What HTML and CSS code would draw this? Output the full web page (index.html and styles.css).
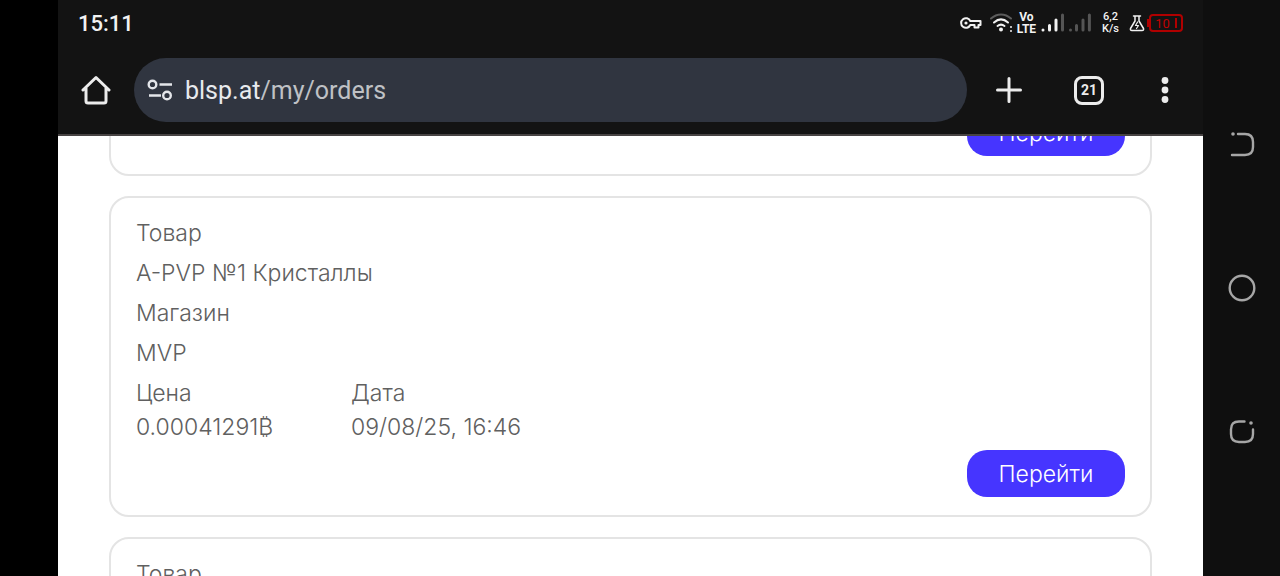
FILE: index.html
```html
<!DOCTYPE html>
<html lang="ru">
<head>
  <meta charset="UTF-8">
  <meta name="viewport" content="width=device-width, initial-scale=1.0">
  <title>blsp.at/my/orders</title>
  <link rel="stylesheet" href="styles.css">
</head>
<body>
  <div class="screen">
    <header class="browser">
      <!-- Status bar -->
      <div class="status">
        <time class="clock">15:11</time>
        <div class="status-icons">
          <svg class="key" width="22" height="16" viewBox="0 0 22 16" fill="none" stroke="#f2f2f2" stroke-width="2">
            <path d="M10.300 6H20.500V10H18.500V12.500H14.500V10H10.300A4.800 4.800 0 1 1 10.300 6Z" stroke-linejoin="round"/>
            <circle cx="6" cy="8" r="1.600" fill="#f2f2f2" stroke="none"/>
          </svg>
          <svg class="wifi" width="24" height="20" viewBox="0 0 24 20" fill="none" stroke-width="2" stroke-linecap="round">
            <path d="M1 5.500C7 0 15 0 21 5.500" stroke="#5c5c5c"/>
            <path d="M4 9.500C8.500 5.500 13.500 5.500 18 9.500M7.500 13C10 11 12 11 14.500 13" stroke="#f2f2f2"/>
            <circle cx="11" cy="16.500" r="2" fill="#f2f2f2"/>
            <path d="M21 14V14.100M21 18V18.100" stroke="#f2f2f2"/>
          </svg>
          <div class="lte"><span>Vo</span><span>LTE</span></div>
          <svg class="signal" width="50" height="20" viewBox="0 0 50 20" fill="none" stroke-width="3" stroke-linecap="round">
            <path d="M2 17V17.100M8.500 12.500V17M15 7V17" stroke="#f2f2f2"/>
            <path d="M21.500 2V17M29.500 17V17.100M35.500 12.500V17M42 7V17M48.400 2V17" stroke="#555"/>
          </svg>
          <div class="speed"><span>6,2</span><span>K/s</span></div>
          <svg class="flask" width="16" height="17" viewBox="0 0 16 17" fill="none" stroke="#f2f2f2" stroke-width="1.500" stroke-linejoin="round" stroke-linecap="round">
            <path d="M4.500 1H11.500M6 1V6L1.500 13.500Q1 15.500 3 15.500H13Q15 15.500 14.500 13.500L10 6V1"/>
            <path d="M8.600 7L6.500 10.500H9.500L7.500 13.500" stroke-width="1.200"/>
          </svg>
          <div class="battery"><span>10</span></div>
        </div>
      </div>

      <!-- Address bar -->
      <div class="toolbar">
        <button class="icon-btn" aria-label="Home">
          <svg width="30" height="30" viewBox="0 0 30 30" fill="none" stroke="#ececec" stroke-width="3" stroke-linejoin="round" stroke-linecap="round">
            <path d="M2 15L15 2.500L28 15M5 13V26Q5 28 7 28H23Q25 28 25 26V13"/>
          </svg>
        </button>
        <a class="address" href="#">
          <svg width="26" height="22" viewBox="0 0 26 22" fill="none" stroke="#e4e6ea" stroke-width="2.400">
            <circle cx="5.500" cy="5.500" r="3.800"/>
            <path d="M12.500 5.500H25M2 16.500H14"/>
            <circle cx="20" cy="16.500" r="3.800"/>
          </svg>
          <span class="url">blsp.at<span class="path">/my/orders</span></span>
        </a>
        <button class="icon-btn" aria-label="New tab">
          <svg width="26" height="26" viewBox="0 0 26 26" stroke="#ececec" stroke-width="3" stroke-linecap="round">
            <path d="M13 1.500V24.500M1.500 13H24.500"/>
          </svg>
        </button>
        <button class="icon-btn"><span class="tab-count">21</span></button>
        <button class="icon-btn" aria-label="Menu">
          <svg width="8" height="28" viewBox="0 0 8 28" fill="#ececec">
            <circle cx="4" cy="4.500" r="3.400"/>
            <circle cx="4" cy="14" r="3.400"/>
            <circle cx="4" cy="23.500" r="3.400"/>
          </svg>
        </button>
      </div>
    </header>

    <!-- Orders list, scrolled part of the way down -->
    <main class="orders">
      <article class="card card-above">
        <button class="open-btn">Перейти</button>
      </article>

      <article class="card">
        <p>Товар</p>
        <p>A-PVP №1 Кристаллы</p>
        <p>Магазин</p>
        <p>MVP</p>
        <dl class="details">
          <div>
            <dt>Цена</dt>
            <dd>0.00041291₿</dd>
          </div>
          <div>
            <dt>Дата</dt>
            <dd>09/08/25, 16:46</dd>
          </div>
        </dl>
        <button class="open-btn">Перейти</button>
      </article>

      <article class="card">
        <p>Товар</p>
      </article>
    </main>
  </div>

  <!-- System navigation -->
  <nav class="system-nav">
    <button class="nav-btn" aria-label="Back">
      <svg width="28" height="28" viewBox="0 0 28 28" fill="none" stroke="#a6a6a6" stroke-width="2.400" stroke-linecap="round">
        <path d="M10 4H17Q25 4 25 12V17Q25 25 17 25H4"/>
        <circle cx="5" cy="4" r="1.800" fill="#a6a6a6" stroke="none"/>
      </svg>
    </button>
    <button class="nav-btn" aria-label="Home">
      <svg width="28" height="28" viewBox="0 0 28 28" fill="none" stroke="#a6a6a6" stroke-width="2.400">
        <circle cx="14" cy="14" r="12.300"/>
      </svg>
    </button>
    <button class="nav-btn" aria-label="Recent apps">
      <svg width="28" height="28" viewBox="0 0 28 28" fill="none" stroke="#a6a6a6" stroke-width="2.400" stroke-linecap="round">
        <path d="M16.500 3.500H11Q3 3.500 3 11.500V16Q3 24 11 24H17Q25 24 25 16V11.500"/>
        <circle cx="23" cy="5" r="1.800" fill="#a6a6a6" stroke="none"/>
      </svg>
    </button>
  </nav>
</body>
</html>
```

FILE: styles.css
```css
* {
  box-sizing: border-box;
}

body {
  display: flex;
  height: 100vh;
  margin: 0;
  padding-left: 58px;
  overflow: hidden;
  background-color: #000;
  font-family: Roboto, sans-serif;
}

button {
  border: none;
  padding: 0;
  font: inherit;
  cursor: pointer;
}

svg {
  display: block;
}

p, dl, dd {
  margin: 0;
}

.screen {
  display: flex;
  flex: 1;
  flex-direction: column;
  background-color: #fff;
}

.browser {
  flex: none;
  border-bottom: 2px solid #474343;
  background-color: #131313;
  color: #f2f2f2;
}

/* Status bar */
.status {
  display: flex;
  justify-content: space-between;
  align-items: center;
  height: 46px;
  padding: 0 20px;
}

.clock {
  font-size: 22px;
  font-weight: 500;
}

.status-icons {
  display: flex;
  align-items: center;
}

.wifi {
  margin-left: 8px;
}

.lte, .speed {
  display: flex;
  flex-direction: column;
  align-items: center;
  font-size: 12px;
  font-weight: 700;
  line-height: 12px;
}

.lte {
  margin-left: 3px;
}

.signal {
  margin-left: 5px;
}

.speed {
  margin-left: 11px;
  font-size: 11px;
  font-weight: 500;
}

.flask {
  margin-left: 10px;
}

.battery {
  display: flex;
  justify-content: center;
  align-items: center;
  position: relative;
  width: 34px;
  height: 18px;
  margin-left: 4px;
  border: 2px solid #b00000;
  border-radius: 4px;
  color: #c00000;
  font-size: 13px;
}

.battery::before {
  content: "";
  position: absolute;
  left: -4px;
  width: 3px;
  height: 8px;
  background-color: #b00000;
}

.battery::after {
  content: "";
  width: 2px;
  height: 10px;
  margin-left: 5px;
  background-color: #b00000;
}

/* Address bar */
.toolbar {
  display: flex;
  align-items: center;
  height: 88px;
}

.icon-btn {
  display: flex;
  justify-content: center;
  align-items: center;
  width: 76px;
  height: 64px;
  background: none;
  color: #ececec;
}

.address + .icon-btn {
  width: 84px;
}

.address {
  display: flex;
  flex: 1;
  align-items: center;
  gap: 12px;
  height: 64px;
  padding: 0 13px;
  border-radius: 32px;
  background-color: #303540;
  color: #e8eaed;
  font-size: 25px;
  text-decoration: none;
}

.path {
  color: #bfc1c5;
}

.tab-count {
  width: 30px;
  height: 29px;
  border: 3px solid #ececec;
  border-radius: 8px;
  font-size: 14px;
  font-weight: 700;
  line-height: 23px;
}

/* Orders */
.orders {
  display: flex;
  flex: 1;
  flex-direction: column;
  gap: 20px;
  min-height: 0;
  padding: 0 51px;
  overflow: hidden;
  color: #606060;
  font-family: Inter, sans-serif;
  font-size: 23px;
  font-weight: 300;
  line-height: 34px;
}

.card {
  display: flex;
  flex: none;
  flex-direction: column;
  gap: 6px;
  padding: 18px 25px;
  border: 2px solid #e4e4e4;
  border-radius: 20px;
}

.card-above {
  margin-top: -47px;
}

.details {
  display: grid;
  grid-template-columns: 215px auto;
  justify-content: start;
}

.open-btn {
  align-self: flex-end;
  width: 158px;
  height: 47px;
  border-radius: 20px;
  background-color: #4635ff;
  color: #fff;
}

/* System navigation */
.system-nav {
  display: flex;
  flex-direction: column;
  justify-content: center;
  width: 77px;
  background-color: #0f0f0f;
}

.nav-btn {
  display: flex;
  justify-content: center;
  align-items: center;
  height: 25%;
  background: none;
}
```
